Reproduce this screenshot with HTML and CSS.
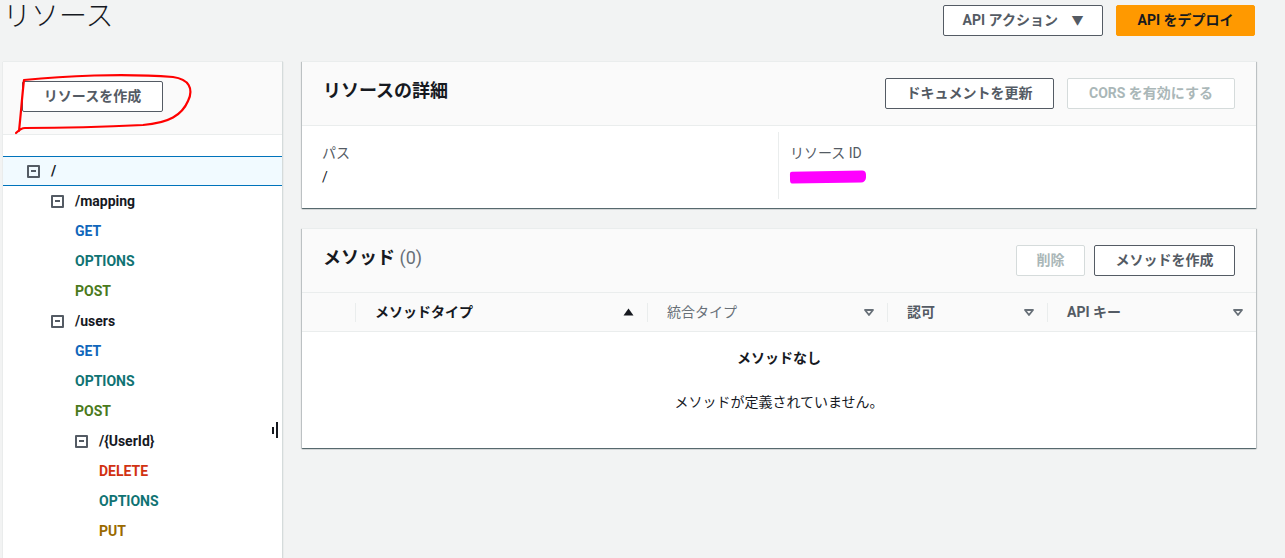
FILE: index.html
```html
<!DOCTYPE html>
<html lang="ja">
<head>
    <meta charset="UTF-8">
    <meta name="viewport" content="width=device-width, initial-scale=1.0">
    <title>リソース</title>
    <link rel="stylesheet" href="styles.css">
</head>
<body>
    <header class="top-bar">
        <h1 class="page-title">リソース</h1>
        <div class="top-actions">
            <button class="btn btn-normal btn-actions">API アクション <span class="caret">&#9660;</span></button>
            <button class="btn btn-primary">API をデプロイ</button>
        </div>
    </header>

    <div class="main">
        <aside class="tree-panel">
            <div class="tree-head">
                <button class="btn btn-normal btn-create">リソースを作成</button>
                <svg class="scribble" width="200" height="70" viewBox="0 0 200 70">
                    <path d="M16 64 C18 46 19 30 21 13 C60 9 120 6 170 10 C186 12 191 22 185 34 C179 48 166 56 140 58 C100 60 60 61 22 61 C18 61 16 63 13 66" fill="none" stroke="#f00" stroke-width="2.2" stroke-linecap="round" stroke-linejoin="round"/>
                </svg>
            </div>
            <ul class="tree">
                <li class="row res selected depth-0"><span class="toggle"></span>/</li>
                <li class="row res depth-1"><span class="toggle"></span>/mapping</li>
                <li class="row method depth-2 m-get">GET</li>
                <li class="row method depth-2 m-options">OPTIONS</li>
                <li class="row method depth-2 m-post">POST</li>
                <li class="row res depth-1"><span class="toggle"></span>/users</li>
                <li class="row method depth-2 m-get">GET</li>
                <li class="row method depth-2 m-options">OPTIONS</li>
                <li class="row method depth-2 m-post">POST</li>
                <li class="row res depth-2"><span class="toggle"></span>/{UserId}</li>
                <li class="row method depth-3 m-delete">DELETE</li>
                <li class="row method depth-3 m-options">OPTIONS</li>
                <li class="row method depth-3 m-put">PUT</li>
            </ul>
            <div class="resizer"><span class="bar-short"></span><span class="bar-long"></span></div>
        </aside>

        <section class="content">
            <div class="card">
                <div class="card-head">
                    <h2 class="card-title">リソースの詳細</h2>
                    <div class="card-actions">
                        <button class="btn btn-normal btn-docs">ドキュメントを更新</button>
                        <button class="btn btn-disabled btn-cors">CORS を有効にする</button>
                    </div>
                </div>
                <div class="details">
                    <div class="detail">
                        <div class="detail-label">パス</div>
                        <div class="detail-value">/</div>
                    </div>
                    <div class="detail detail-right">
                        <div class="detail-label">リソース ID</div>
                        <div class="detail-value"><span class="redacted"></span></div>
                    </div>
                </div>
            </div>

            <div class="card">
                <div class="card-head">
                    <h2 class="card-title">メソッド <span class="count">(0)</span></h2>
                    <div class="card-actions tight">
                        <button class="btn btn-disabled btn-delete">削除</button>
                        <button class="btn btn-normal btn-method">メソッドを作成</button>
                    </div>
                </div>
                <div class="table-head">
                    <div class="col col-check"></div>
                    <div class="col col-type active">メソッドタイプ
                        <svg class="sort" width="11" height="8" viewBox="0 0 11 8"><path d="M0.5 7.5 L5.5 0.5 L10.5 7.5 Z" fill="#16191f"/></svg>
                    </div>
                    <div class="col col-int">統合タイプ
                        <svg class="sort" width="10" height="7" viewBox="0 0 10 7"><path d="M1 1 L9 1 L5 6 Z" fill="none" stroke="#687078" stroke-width="1.8" stroke-linejoin="round"/></svg>
                    </div>
                    <div class="col col-auth">認可
                        <svg class="sort" width="10" height="7" viewBox="0 0 10 7"><path d="M1 1 L9 1 L5 6 Z" fill="none" stroke="#687078" stroke-width="1.8" stroke-linejoin="round"/></svg>
                    </div>
                    <div class="col col-key">API キー
                        <svg class="sort" width="10" height="7" viewBox="0 0 10 7"><path d="M1 1 L9 1 L5 6 Z" fill="none" stroke="#687078" stroke-width="1.8" stroke-linejoin="round"/></svg>
                    </div>
                </div>
                <div class="empty">
                    <div class="empty-title">メソッドなし</div>
                    <div class="empty-text">メソッドが定義されていません。</div>
                </div>
            </div>
        </section>
    </div>
</body>
</html>
```

FILE: styles.css
```css
body {
    margin: 0;
    background-color: #f2f3f3;
    font-family: Roboto, "Noto Sans CJK JP", sans-serif;
    font-size: 14px;
    color: #16191f;
    overflow: hidden;
}
ul {
    list-style: none;
    margin: 0;
    padding: 0;
}
h1, h2 {
    margin: 0;
}

/* buttons */
.btn {
    font-family: inherit;
    font-size: 14px;
    font-weight: bold;
    height: 31px;
    padding: 0;
    border-radius: 2px;
    background: #fff;
    cursor: pointer;
    line-height: 27px;
    white-space: nowrap;
}
.btn-normal {
    border: 1px solid #545b64;
    color: #545b64;
}
.btn-primary {
    border: 1px solid #ff9900;
    background: #ff9900;
    color: #16191f;
}
.btn-disabled {
    border: 1px solid #d5dbdb;
    color: #aab7b8;
    cursor: default;
}
.caret {
    font-size: 12px;
    margin-left: 10px;
}

/* top bar */
.top-bar {
    display: flex;
    justify-content: space-between;
    align-items: flex-start;
    height: 61px;
    padding: 0 30px 0 3px;
}
.page-title {
    font-size: 28px;
    font-weight: 300;
    line-height: 34px;
}
.top-actions {
    display: flex;
    gap: 13px;
    margin-top: 5px;
}
.btn-actions {
    width: 160px;
}
.btn-primary {
    width: 139px;
}

/* main */
.main {
    display: flex;
    padding-left: 3px;
}
.tree-panel {
    position: relative;
    width: 279px;
    height: 520px;
    background: #fff;
    border-right: 1px solid #d5dbdb;
    box-shadow: 0 1px 1px 0 rgba(0, 28, 36, 0.2);
    border-top: 1px solid #eaeded;
}
.tree-head {
    position: relative;
    height: 73px;
    background: #fafafa;
    border-bottom: 1px solid #eaeded;
    padding: 19px 0 0 19px;
    box-sizing: border-box;
}
.btn-create {
    width: 141px;
}
.scribble {
    position: absolute;
    left: 0;
    top: 5px;
}
.tree {
    padding-top: 21px;
}
.row {
    height: 30px;
    line-height: 30px;
    font-weight: bold;
    display: flex;
    align-items: center;
    box-sizing: border-box;
}
.res {
    color: #16191f;
}
.selected {
    background: #f1faff;
    border-top: 1px solid #0073bb;
    border-bottom: 1px solid #0073bb;
}
.toggle {
    position: relative;
    width: 13px;
    height: 13px;
    border: 2px solid #545b64;
    border-radius: 1px;
    box-sizing: border-box;
    margin-right: 11px;
}
.toggle::after {
    content: "";
    position: absolute;
    left: 2px;
    right: 2px;
    top: 3.5px;
    height: 2px;
    background: #545b64;
}
.depth-0 { padding-left: 24px; }
.depth-1 { padding-left: 48px; }
.depth-2 { padding-left: 72px; }
.depth-3 { padding-left: 96px; }
.m-get { color: #1166bb; }
.m-options { color: #0f7373; }
.m-post { color: #4b7a1c; }
.m-delete { color: #d13212; }
.m-put { color: #9a6a00; }
.resizer {
    position: absolute;
    left: 269px;
    top: 360px;
    display: flex;
    align-items: center;
    gap: 2px;
    height: 16px;
}
.bar-short {
    width: 2px;
    height: 7px;
    background: #16191f;
}
.bar-long {
    width: 2px;
    height: 16px;
    background: #16191f;
}

/* content */
.content {
    display: flex;
    flex-direction: column;
    gap: 20px;
    margin-left: 19px;
    width: 954px;
}
.card {
    background: #fff;
    border-top: 1px solid #eaeded;
    box-shadow: 0 1px 1px 0 rgba(0, 28, 36, 0.5), 1px 1px 1px 0 rgba(0, 28, 36, 0.15), -1px 1px 1px 0 rgba(0, 28, 36, 0.15);
}
.card-head {
    display: flex;
    justify-content: space-between;
    align-items: center;
    height: 63px;
    padding: 0 21px;
    background: #fafafa;
    border-bottom: 1px solid #eaeded;
}
.card-title {
    font-size: 18px;
    font-weight: bold;
    line-height: 22px;
    margin-bottom: 6px;
}
.count {
    font-weight: normal;
    color: #687078;
}
.card-actions {
    display: flex;
    gap: 13px;
}
.card-actions.tight {
    gap: 9px;
}
.btn-docs { width: 169px; }
.btn-cors { width: 168px; }
.btn-delete { width: 69px; }
.btn-method { width: 141px; }

/* details */
.details {
    display: grid;
    grid-template-columns: 476px 1fr;
    padding: 6px 0 9px;
}
.detail {
    padding: 9px 20px 12px;
    height: 46px;
}
.detail-right {
    border-left: 1px solid #eaeded;
    padding-left: 11px;
}
.detail-label {
    color: #545b64;
    line-height: 24px;
}
.detail-value {
    line-height: 24px;
}
.redacted {
    display: inline-block;
    width: 76px;
    height: 12px;
    margin-top: 6px;
    background: #ff00ff;
    border-radius: 2px 4px 5px 3px;
    transform: rotate(-1deg);
}

/* table */
.table-head {
    display: flex;
    height: 38px;
    background: #fafafa;
    border-bottom: 1px solid #eaeded;
}
.col {
    display: flex;
    align-items: center;
    justify-content: space-between;
    box-sizing: border-box;
    font-weight: bold;
    color: #545b64;
    padding: 0 13px 3px 20px;
    position: relative;
}
.col .sort {
    margin-top: 3px;
}
.col::before {
    content: "";
    position: absolute;
    left: 0;
    top: 10px;
    bottom: 9px;
    border-left: 1px solid #eaeded;
}
.col-check::before {
    display: none;
}
.col.active {
    color: #16191f;
}
.col-check { width: 53px; }
.col-type { width: 292px; }
.col-int { width: 240px; font-weight: normal; color: #687078; }
.col-auth { width: 160px; }
.col-key { flex: 1; }
.empty {
    text-align: center;
    padding: 16px 0 36px;
}
.empty-title {
    font-weight: bold;
    line-height: 20px;
}
.empty-text {
    margin-top: 24px;
    line-height: 20px;
}
```
